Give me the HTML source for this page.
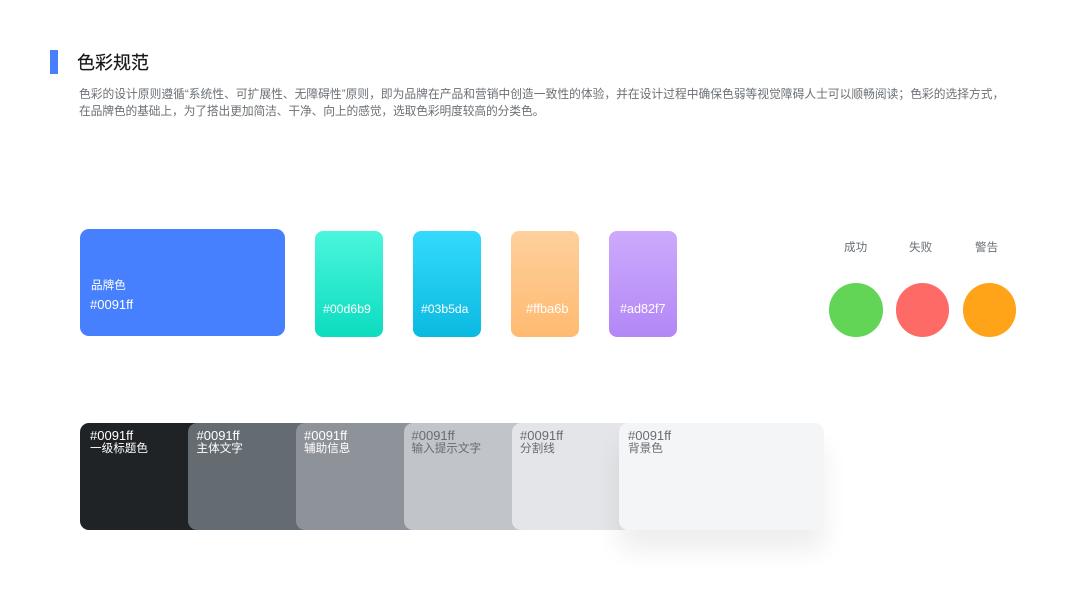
<!DOCTYPE html>
<html lang="zh">
<head>
<meta charset="utf-8">
<title>色彩规范</title>
<style>
html,body{margin:0;padding:0;background:#fff}
body{position:relative;width:1067px;height:600px;overflow:hidden;font-family:"Liberation Sans","Noto Sans CJK SC",sans-serif;filter:blur(.3px)}
div{position:absolute;box-sizing:border-box;white-space:nowrap}
.bar{left:49.5px;top:50px;width:8px;height:24px;background:#4680ff}
.title{left:77px;top:51px;font-size:18px;line-height:25px;color:#15181a;-webkit-text-stroke:.2px #15181a}
.p{left:79px;font-size:11.75px;line-height:17px;color:#6b7075}
.s{top:231px;width:68px;height:106px;border-radius:8px;color:#fff}
.s span{position:absolute;top:70px;line-height:16px;white-space:nowrap}
.l{top:240px;font-size:11.6px;line-height:16px;color:#6a6f74}
.c{top:283.3px;width:53.4px;height:53.4px;border-radius:50%}
.k{top:423px;height:107px;font-size:11.6px;line-height:12px;padding-top:7px;border-radius:9px 0 0 9px}
.k b{font-weight:normal;font-size:13px}
</style>
</head>
<body>
<div class="bar"></div>
<div class="title">色彩规范</div>
<div class="p" style="top:85.5px;letter-spacing:.012px">色彩的设计原则遵循“系统性、可扩展性、无障碍性”原则，即为品牌在产品和营销中创造一致性的体验，并在设计过程中确保色弱等视觉障碍人士可以顺畅阅读；色彩的选择方式，</div>
<div class="p" style="top:103px;letter-spacing:-.12px">在品牌色的基础上，为了搭出更加简洁、干净、向上的感觉，选取色彩明度较高的分类色。</div>

<div style="left:80px;top:229px;width:205px;height:107px;border-radius:9px;background:#4680ff"></div>
<div style="left:91px;top:278px;color:#fff;font-size:11.6px;line-height:16px">品牌色</div>
<div style="left:90px;top:297px;color:#fff;font-size:13px;line-height:16px">#0091ff</div>

<div class="s" style="left:315px;background:linear-gradient(180deg,#4af6dd,#0cdcbf)"><span style="left:8px;font-size:12.3px">#00d6b9</span></div>
<div class="s" style="left:413px;background:linear-gradient(180deg,#33dafd,#0bb9e0)"><span style="left:8px;font-size:12.2px">#03b5da</span></div>
<div class="s" style="left:511px;background:linear-gradient(180deg,#fed09c,#ffba70)"><span style="left:15px;font-size:12.8px">#ffba6b</span></div>
<div class="s" style="left:609px;background:linear-gradient(180deg,#cdaafb,#b287f7)"><span style="left:11px;font-size:12.6px">#ad82f7</span></div>

<div class="l" style="left:844px">成功</div>
<div class="l" style="left:909px">失败</div>
<div class="l" style="left:975px">警告</div>
<div class="c" style="left:829.3px;background:#62d456"></div>
<div class="c" style="left:896px;background:#fe6b67"></div>
<div class="c" style="left:963px;background:#ffa319"></div>

<div class="k" style="left:80px;width:130px;background:#1f2326;color:#fff;padding-left:10px"><b>#0091ff</b><br>一级标题色</div>
<div class="k" style="left:187.5px;width:130px;background:#646b71;color:#fff;padding-left:9px"><b>#0091ff</b><br>主体文字</div>
<div class="k" style="left:296px;width:130px;background:#8e9299;color:#fff;padding-left:8px"><b>#0091ff</b><br>辅助信息</div>
<div class="k" style="left:403.5px;width:130px;background:#c1c4c9;color:#686d72;padding-left:8px"><b>#0091ff</b><br>输入提示文字</div>
<div class="k" style="left:512px;width:130px;background:#e4e5e8;color:#686d72;padding-left:8px"><b>#0091ff</b><br>分割线</div>
<div class="k" style="left:619px;width:205px;background:#f4f5f7;color:#686d72;border-radius:9px;padding-left:9px;box-shadow:0 20px 26px rgba(0,0,0,.07)"><b>#0091ff</b><br>背景色</div>
</body>
</html>
